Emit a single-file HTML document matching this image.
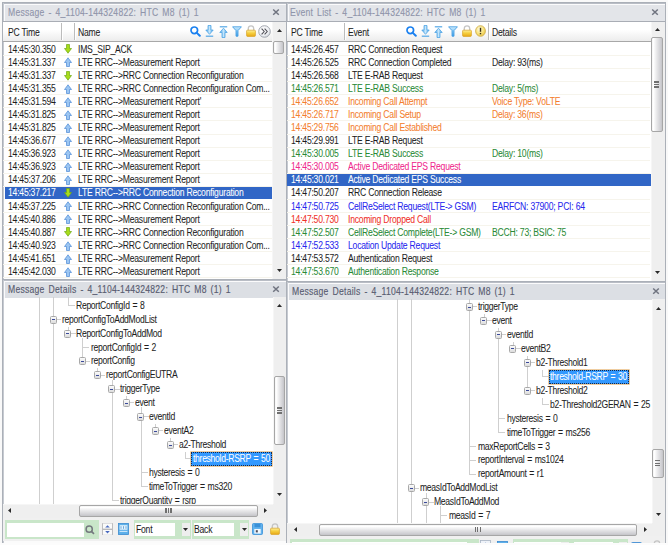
<!DOCTYPE html><html><head><meta charset="utf-8"><style>
*{margin:0;padding:0;box-sizing:border-box}
html,body{width:668px;height:545px;overflow:hidden;background:#f9f9f9;font-family:"Liberation Sans", sans-serif;}
.a{position:absolute}
.t{position:absolute;white-space:nowrap;font-size:10px;letter-spacing:-0.25px;word-spacing:0px;color:#1e1e1e;line-height:13px;transform:scaleX(0.86);transform-origin:0 0;-webkit-text-stroke:0.05px currentColor}
.tr{letter-spacing:-0.35px;word-spacing:0.8px}
.ttl{position:absolute;white-space:nowrap;font-size:10.5px;letter-spacing:0.3px;word-spacing:1.5px;line-height:12px;transform:scaleX(0.82);transform-origin:0 0;-webkit-text-stroke:0.15px currentColor}

.vl{position:absolute;width:1px;background:#cfcfcf}
.hl{position:absolute;height:1px;background:#cfcfcf}
.box{position:absolute;width:7px;height:8px;border:1px solid #a8a8a8;border-radius:1.5px;background:linear-gradient(#fbfbfb,#dcdcdc)}
.box:after{content:"";position:absolute;left:1px;top:2.5px;width:3px;height:1px;background:#3a4a9a}
</style></head><body>
<svg width="0" height="0" style="position:absolute"><defs><linearGradient id="gb" x1="0" y1="0" x2="1" y2="0"><stop offset="0" stop-color="#4aa2e6"/><stop offset="0.5" stop-color="#c4e6fc"/><stop offset="1" stop-color="#4aa2e6"/></linearGradient><linearGradient id="gf" x1="0" y1="0" x2="0" y2="1"><stop offset="0" stop-color="#d4eefe"/><stop offset="0.5" stop-color="#7cc4f4"/><stop offset="1" stop-color="#3a9ae4"/></linearGradient><linearGradient id="gl" x1="0" y1="0" x2="0" y2="1"><stop offset="0" stop-color="#fdf0a0"/><stop offset="0.45" stop-color="#f6d040"/><stop offset="1" stop-color="#e8a818"/></linearGradient><radialGradient id="ge" cx="0.4" cy="0.35" r="0.7"><stop offset="0" stop-color="#fffbe0"/><stop offset="0.6" stop-color="#f8e27a"/><stop offset="1" stop-color="#e8c040"/></radialGradient><radialGradient id="gm" cx="0.4" cy="0.35" r="0.7"><stop offset="0" stop-color="#ffffff"/><stop offset="0.7" stop-color="#eceef2"/><stop offset="1" stop-color="#c8ccd4"/></radialGradient></defs></svg>
<div class="a" style="left:2px;top:2px;width:285px;height:279px;border:1px solid #abb0b8;background:#fff"></div>
<div class="a" style="left:3px;top:3px;width:283px;height:1px;background:#b9bdc5"></div>
<div class="a" style="left:3px;top:3px;width:1px;height:277px;background:#c6cad1"></div>
<div class="a" style="left:4px;top:4px;width:282px;height:18px;background:#e3e5e9;border-top:1px solid #fbfbfc;border-left:1px solid #fbfbfc"></div>
<div class="ttl" style="left:8px;top:6px;color:#9095ab">Message - 4_1104-144324822: HTC M8 (1) 1</div>
<svg class="a" style="left:272px;top:8px" width="8" height="8" viewBox="0 0 8 8"><path d="M1.2 1.5L6.8 6.8M6.8 1.5L1.2 6.8" stroke="#707480" stroke-width="1.5"/></svg>
<div class="a" style="left:3px;top:21px;width:283px;height:1px;background:#a9adb5"></div>
<div class="a" style="left:3px;top:22px;width:269px;height:19px;background:linear-gradient(#ffffff 0%,#ffffff 40%,#ececec 100%)"></div>
<div class="a" style="left:3px;top:41px;width:269px;height:1px;background:#a8a8a8"></div>
<div class="a" style="left:61px;top:23px;width:1px;height:17px;background:#bcbcbc"></div>
<div class="a" style="left:62px;top:23px;width:1px;height:17px;background:#fff"></div>
<div class="a" style="left:74px;top:23px;width:1px;height:17px;background:#bcbcbc"></div>
<div class="a" style="left:75px;top:23px;width:1px;height:17px;background:#fff"></div>
<div class="t" style="left:8px;top:25.7px;">PC Time</div>
<div class="t" style="left:78px;top:25.7px;">Name</div>
<svg class="a" style="left:190px;top:25.5px" width="11" height="11" viewBox="0 0 11 11"><circle cx="4.3" cy="4.3" r="3.3" fill="none" stroke="#1a80f0" stroke-width="1.7"/><path d="M6.6 6.6L9.8 9.8" stroke="#1a80f0" stroke-width="2" stroke-linecap="round"/></svg>
<svg class="a" style="left:204.5px;top:25px" width="9" height="12" viewBox="0 0 9 12"><path d="M3 0.5H6V5H8.2L4.5 9.3L0.8 5H3Z" fill="url(#gb)" stroke="#52a6e6" stroke-width="0.8"/><path d="M0.8 11.2H8.2" stroke="#52a6e6" stroke-width="1.2"/></svg>
<svg class="a" style="left:218.5px;top:25.5px" width="9" height="12" viewBox="0 0 9 12"><path d="M0.8 0.8H8.2" stroke="#52a6e6" stroke-width="1.2"/><path d="M3 11.5H6V6.5H8.2L4.5 2.2L0.8 6.5H3Z" fill="url(#gb)" stroke="#52a6e6" stroke-width="0.8"/></svg>
<svg class="a" style="left:232px;top:26px" width="10" height="11" viewBox="0 0 10 11"><path d="M0.6 0.8H9.4L6 4.6V10.2H4V4.6Z" fill="url(#gf)" stroke="#4aa0e4" stroke-width="0.9" stroke-linejoin="round"/></svg>
<svg class="a" style="left:246px;top:25px" width="10" height="12" viewBox="0 0 10 12"><path d="M2.3 5.5V3.6C2.3 1.9 3.5 0.8 5 0.8C6.5 0.8 7.7 1.9 7.7 3.6V5.5" fill="none" stroke="#c4c4c4" stroke-width="1.3"/><rect x="0.6" y="5.2" width="8.8" height="6.2" rx="0.8" fill="url(#gl)" stroke="#d8a020" stroke-width="0.7"/></svg>
<svg class="a" style="left:257.5px;top:25px" width="13" height="13" viewBox="0 0 13 13"><circle cx="6.5" cy="6.5" r="5.8" fill="url(#gm)" stroke="#a4a8b0" stroke-width="1"/><path d="M3.6 3.6L6.2 6.5L3.6 9.4M6.6 3.6L9.2 6.5L6.6 9.4" fill="none" stroke="#505058" stroke-width="1.1"/></svg>
<div class="a" style="left:272px;top:22px;width:14px;height:258px;background:#efefef;border-left:1px solid #f6f6f6"></div>
<svg class="a" style="left:276.7px;top:28.5px" width="5" height="3" viewBox="0 0 5 3"><path d="M0 3L2.5 0L5 3Z" fill="#2a2a2a"/></svg>
<div class="a" style="left:273px;top:41px;width:11px;height:13px;border:1px solid #a6a6a6;border-radius:2px;background:linear-gradient(90deg,#f4f4f4 0%,#ffffff 15%,#e6e6e8 50%,#cfcfd3 85%,#c4c4c8 100%)"></div>
<svg class="a" style="left:276.5px;top:269.0px" width="5" height="3" viewBox="0 0 5 3"><path d="M0 0L2.5 3L5 0Z" fill="#2a2a2a"/></svg>
<div class="a" style="left:3px;top:55.08px;width:269px;height:1px;background:#f6f4ec"></div>
<div class="t" style="left:8px;top:42.6px;color:#1e1e1e">14:45:30.350</div>
<svg class="a" style="left:64.3px;top:44.4px" width="8" height="10" viewBox="0 0 8 10"><path d="M2.5 0.5H5.5V4.5H7.5L4 9.2L0.5 4.5H2.5Z" fill="#a8dc1a" stroke="#6ea812" stroke-width="0.7"/></svg>
<div class="t" style="left:78.3px;top:42.6px;color:#1e1e1e">IMS_SIP_ACK</div>
<div class="a" style="left:3px;top:68.15px;width:269px;height:1px;background:#f6f4ec"></div>
<div class="t" style="left:8px;top:55.68px;color:#1e1e1e">14:45:31.337</div>
<svg class="a" style="left:64.3px;top:57.48px" width="8" height="10" viewBox="0 0 8 10"><path d="M2.5 9.5H5.5V5.5H7.5L4 0.8L0.5 5.5H2.5Z" fill="#9cc6f2" stroke="#4a88d6" stroke-width="0.7"/></svg>
<div class="t" style="left:78.3px;top:55.68px;color:#1e1e1e">LTE RRC-->Measurement Report</div>
<div class="a" style="left:3px;top:81.23px;width:269px;height:1px;background:#f6f4ec"></div>
<div class="t" style="left:8px;top:68.75px;color:#1e1e1e">14:45:31.337</div>
<svg class="a" style="left:64.3px;top:70.55px" width="8" height="10" viewBox="0 0 8 10"><path d="M2.5 0.5H5.5V4.5H7.5L4 9.2L0.5 4.5H2.5Z" fill="#a8dc1a" stroke="#6ea812" stroke-width="0.7"/></svg>
<div class="t" style="left:78.3px;top:68.75px;color:#1e1e1e">LTE RRC-->RRC Connection Reconfiguration</div>
<div class="a" style="left:3px;top:94.3px;width:269px;height:1px;background:#f6f4ec"></div>
<div class="t" style="left:8px;top:81.82px;color:#1e1e1e">14:45:31.355</div>
<svg class="a" style="left:64.3px;top:83.62px" width="8" height="10" viewBox="0 0 8 10"><path d="M2.5 9.5H5.5V5.5H7.5L4 0.8L0.5 5.5H2.5Z" fill="#9cc6f2" stroke="#4a88d6" stroke-width="0.7"/></svg>
<div class="t" style="left:78.3px;top:81.82px;color:#1e1e1e">LTE RRC-->RRC Connection Reconfiguration Com...</div>
<div class="a" style="left:3px;top:107.38px;width:269px;height:1px;background:#f6f4ec"></div>
<div class="t" style="left:8px;top:94.9px;color:#1e1e1e">14:45:31.594</div>
<svg class="a" style="left:64.3px;top:96.7px" width="8" height="10" viewBox="0 0 8 10"><path d="M2.5 9.5H5.5V5.5H7.5L4 0.8L0.5 5.5H2.5Z" fill="#9cc6f2" stroke="#4a88d6" stroke-width="0.7"/></svg>
<div class="t" style="left:78.3px;top:94.9px;color:#1e1e1e">LTE RRC-->Measurement Report'</div>
<div class="a" style="left:3px;top:120.45px;width:269px;height:1px;background:#f6f4ec"></div>
<div class="t" style="left:8px;top:107.97px;color:#1e1e1e">14:45:31.825</div>
<svg class="a" style="left:64.3px;top:109.78px" width="8" height="10" viewBox="0 0 8 10"><path d="M2.5 9.5H5.5V5.5H7.5L4 0.8L0.5 5.5H2.5Z" fill="#9cc6f2" stroke="#4a88d6" stroke-width="0.7"/></svg>
<div class="t" style="left:78.3px;top:107.97px;color:#1e1e1e">LTE RRC-->Measurement Report</div>
<div class="a" style="left:3px;top:133.52px;width:269px;height:1px;background:#f6f4ec"></div>
<div class="t" style="left:8px;top:121.05px;color:#1e1e1e">14:45:31.825</div>
<svg class="a" style="left:64.3px;top:122.85px" width="8" height="10" viewBox="0 0 8 10"><path d="M2.5 9.5H5.5V5.5H7.5L4 0.8L0.5 5.5H2.5Z" fill="#9cc6f2" stroke="#4a88d6" stroke-width="0.7"/></svg>
<div class="t" style="left:78.3px;top:121.05px;color:#1e1e1e">LTE RRC-->Measurement Report</div>
<div class="a" style="left:3px;top:146.6px;width:269px;height:1px;background:#f6f4ec"></div>
<div class="t" style="left:8px;top:134.12px;color:#1e1e1e">14:45:36.677</div>
<svg class="a" style="left:64.3px;top:135.92px" width="8" height="10" viewBox="0 0 8 10"><path d="M2.5 9.5H5.5V5.5H7.5L4 0.8L0.5 5.5H2.5Z" fill="#9cc6f2" stroke="#4a88d6" stroke-width="0.7"/></svg>
<div class="t" style="left:78.3px;top:134.12px;color:#1e1e1e">LTE RRC-->Measurement Report</div>
<div class="a" style="left:3px;top:159.67px;width:269px;height:1px;background:#f6f4ec"></div>
<div class="t" style="left:8px;top:147.2px;color:#1e1e1e">14:45:36.923</div>
<svg class="a" style="left:64.3px;top:149.0px" width="8" height="10" viewBox="0 0 8 10"><path d="M2.5 9.5H5.5V5.5H7.5L4 0.8L0.5 5.5H2.5Z" fill="#9cc6f2" stroke="#4a88d6" stroke-width="0.7"/></svg>
<div class="t" style="left:78.3px;top:147.2px;color:#1e1e1e">LTE RRC-->Measurement Report</div>
<div class="a" style="left:3px;top:172.75px;width:269px;height:1px;background:#f6f4ec"></div>
<div class="t" style="left:8px;top:160.28px;color:#1e1e1e">14:45:36.923</div>
<svg class="a" style="left:64.3px;top:162.08px" width="8" height="10" viewBox="0 0 8 10"><path d="M2.5 9.5H5.5V5.5H7.5L4 0.8L0.5 5.5H2.5Z" fill="#9cc6f2" stroke="#4a88d6" stroke-width="0.7"/></svg>
<div class="t" style="left:78.3px;top:160.28px;color:#1e1e1e">LTE RRC-->Measurement Report</div>
<div class="a" style="left:3px;top:185.82px;width:269px;height:1px;background:#f6f4ec"></div>
<div class="t" style="left:8px;top:173.35px;color:#1e1e1e">14:45:37.206</div>
<svg class="a" style="left:64.3px;top:175.15px" width="8" height="10" viewBox="0 0 8 10"><path d="M2.5 9.5H5.5V5.5H7.5L4 0.8L0.5 5.5H2.5Z" fill="#9cc6f2" stroke="#4a88d6" stroke-width="0.7"/></svg>
<div class="t" style="left:78.3px;top:173.35px;color:#1e1e1e">LTE RRC-->Measurement Report</div>
<div class="a" style="left:5px;top:186.82px;width:267px;height:12.4px;background:#3166c6"></div>
<div class="t" style="left:8px;top:186.42px;color:#ffffff">14:45:37.217</div>
<svg class="a" style="left:64.3px;top:188.22px" width="8" height="10" viewBox="0 0 8 10"><path d="M2.5 0.5H5.5V4.5H7.5L4 9.2L0.5 4.5H2.5Z" fill="#a8dc1a" stroke="#6ea812" stroke-width="0.7"/></svg>
<div class="t" style="left:78.3px;top:186.42px;color:#ffffff">LTE RRC-->RRC Connection Reconfiguration</div>
<div class="a" style="left:3px;top:211.97px;width:269px;height:1px;background:#f6f4ec"></div>
<div class="t" style="left:8px;top:199.5px;color:#1e1e1e">14:45:37.225</div>
<svg class="a" style="left:64.3px;top:201.3px" width="8" height="10" viewBox="0 0 8 10"><path d="M2.5 9.5H5.5V5.5H7.5L4 0.8L0.5 5.5H2.5Z" fill="#9cc6f2" stroke="#4a88d6" stroke-width="0.7"/></svg>
<div class="t" style="left:78.3px;top:199.5px;color:#1e1e1e">LTE RRC-->RRC Connection Reconfiguration Com...</div>
<div class="a" style="left:3px;top:225.05px;width:269px;height:1px;background:#f6f4ec"></div>
<div class="t" style="left:8px;top:212.57px;color:#1e1e1e">14:45:40.886</div>
<svg class="a" style="left:64.3px;top:214.38px" width="8" height="10" viewBox="0 0 8 10"><path d="M2.5 9.5H5.5V5.5H7.5L4 0.8L0.5 5.5H2.5Z" fill="#9cc6f2" stroke="#4a88d6" stroke-width="0.7"/></svg>
<div class="t" style="left:78.3px;top:212.57px;color:#1e1e1e">LTE RRC-->Measurement Report</div>
<div class="a" style="left:3px;top:238.12px;width:269px;height:1px;background:#f6f4ec"></div>
<div class="t" style="left:8px;top:225.65px;color:#1e1e1e">14:45:40.887</div>
<svg class="a" style="left:64.3px;top:227.45px" width="8" height="10" viewBox="0 0 8 10"><path d="M2.5 0.5H5.5V4.5H7.5L4 9.2L0.5 4.5H2.5Z" fill="#a8dc1a" stroke="#6ea812" stroke-width="0.7"/></svg>
<div class="t" style="left:78.3px;top:225.65px;color:#1e1e1e">LTE RRC-->RRC Connection Reconfiguration</div>
<div class="a" style="left:3px;top:251.2px;width:269px;height:1px;background:#f6f4ec"></div>
<div class="t" style="left:8px;top:238.72px;color:#1e1e1e">14:45:40.923</div>
<svg class="a" style="left:64.3px;top:240.53px" width="8" height="10" viewBox="0 0 8 10"><path d="M2.5 9.5H5.5V5.5H7.5L4 0.8L0.5 5.5H2.5Z" fill="#9cc6f2" stroke="#4a88d6" stroke-width="0.7"/></svg>
<div class="t" style="left:78.3px;top:238.72px;color:#1e1e1e">LTE RRC-->RRC Connection Reconfiguration Com...</div>
<div class="a" style="left:3px;top:264.27px;width:269px;height:1px;background:#f6f4ec"></div>
<div class="t" style="left:8px;top:251.8px;color:#1e1e1e">14:45:41.651</div>
<svg class="a" style="left:64.3px;top:253.6px" width="8" height="10" viewBox="0 0 8 10"><path d="M2.5 9.5H5.5V5.5H7.5L4 0.8L0.5 5.5H2.5Z" fill="#9cc6f2" stroke="#4a88d6" stroke-width="0.7"/></svg>
<div class="t" style="left:78.3px;top:251.8px;color:#1e1e1e">LTE RRC-->Measurement Report</div>
<div class="a" style="left:3px;top:277.35px;width:269px;height:1px;background:#f6f4ec"></div>
<div class="t" style="left:8px;top:264.88px;color:#1e1e1e">14:45:42.030</div>
<svg class="a" style="left:64.3px;top:266.67px" width="8" height="10" viewBox="0 0 8 10"><path d="M2.5 9.5H5.5V5.5H7.5L4 0.8L0.5 5.5H2.5Z" fill="#9cc6f2" stroke="#4a88d6" stroke-width="0.7"/></svg>
<div class="t" style="left:78.3px;top:264.88px;color:#1e1e1e">LTE RRC-->Measurement Report</div>
<div class="a" style="left:286px;top:2px;width:380px;height:281px;border:1px solid #abb0b8;background:#fff"></div>
<div class="a" style="left:287px;top:3px;width:378px;height:1px;background:#b9bdc5"></div>
<div class="a" style="left:287px;top:3px;width:1px;height:279px;background:#c6cad1"></div>
<div class="a" style="left:288px;top:4px;width:377px;height:18px;background:#e3e5e9;border-top:1px solid #fbfbfc;border-left:1px solid #fbfbfc"></div>
<div class="ttl" style="left:290px;top:6px;color:#9095ab">Event List - 4_1104-144324822: HTC M8 (1) 1</div>
<svg class="a" style="left:651px;top:8px" width="8" height="8" viewBox="0 0 8 8"><path d="M1.2 1.5L6.8 6.8M6.8 1.5L1.2 6.8" stroke="#707480" stroke-width="1.5"/></svg>
<div class="a" style="left:287px;top:21px;width:378px;height:1px;background:#a9adb5"></div>
<div class="a" style="left:287px;top:22px;width:364px;height:19px;background:linear-gradient(#ffffff 0%,#ffffff 40%,#ececec 100%)"></div>
<div class="a" style="left:287px;top:41px;width:364px;height:1px;background:#a8a8a8"></div>
<div class="a" style="left:344px;top:23px;width:1px;height:17px;background:#bcbcbc"></div>
<div class="a" style="left:345px;top:23px;width:1px;height:17px;background:#fff"></div>
<div class="a" style="left:488px;top:23px;width:1px;height:17px;background:#bcbcbc"></div>
<div class="a" style="left:489px;top:23px;width:1px;height:17px;background:#fff"></div>
<div class="t" style="left:290.6px;top:25.7px;">PC Time</div>
<div class="t" style="left:347.8px;top:25.7px;">Event</div>
<div class="t" style="left:491.6px;top:25.7px;">Details</div>
<svg class="a" style="left:406px;top:25.5px" width="11" height="11" viewBox="0 0 11 11"><circle cx="4.3" cy="4.3" r="3.3" fill="none" stroke="#1a80f0" stroke-width="1.7"/><path d="M6.6 6.6L9.8 9.8" stroke="#1a80f0" stroke-width="2" stroke-linecap="round"/></svg>
<svg class="a" style="left:420.5px;top:25px" width="9" height="12" viewBox="0 0 9 12"><path d="M3 0.5H6V5H8.2L4.5 9.3L0.8 5H3Z" fill="url(#gb)" stroke="#52a6e6" stroke-width="0.8"/><path d="M0.8 11.2H8.2" stroke="#52a6e6" stroke-width="1.2"/></svg>
<svg class="a" style="left:434px;top:25.5px" width="9" height="12" viewBox="0 0 9 12"><path d="M0.8 0.8H8.2" stroke="#52a6e6" stroke-width="1.2"/><path d="M3 11.5H6V6.5H8.2L4.5 2.2L0.8 6.5H3Z" fill="url(#gb)" stroke="#52a6e6" stroke-width="0.8"/></svg>
<svg class="a" style="left:447.5px;top:26px" width="10" height="11" viewBox="0 0 10 11"><path d="M0.6 0.8H9.4L6 4.6V10.2H4V4.6Z" fill="url(#gf)" stroke="#4aa0e4" stroke-width="0.9" stroke-linejoin="round"/></svg>
<svg class="a" style="left:462px;top:25px" width="10" height="12" viewBox="0 0 10 12"><path d="M2.3 5.5V3.6C2.3 1.9 3.5 0.8 5 0.8C6.5 0.8 7.7 1.9 7.7 3.6V5.5" fill="none" stroke="#c4c4c4" stroke-width="1.3"/><rect x="0.6" y="5.2" width="8.8" height="6.2" rx="0.8" fill="url(#gl)" stroke="#d8a020" stroke-width="0.7"/></svg>
<svg class="a" style="left:474.5px;top:25px" width="11" height="12" viewBox="0 0 11 12"><ellipse cx="5.5" cy="6" rx="4.9" ry="5.3" fill="url(#ge)" stroke="#d0b050" stroke-width="0.9"/><path d="M5.5 2.8V6.8" stroke="#3a3018" stroke-width="1.4"/><rect x="4.8" y="7.9" width="1.4" height="1.4" fill="#3a3018"/></svg>
<div class="a" style="left:651px;top:22px;width:14px;height:260px;background:#efefef;border-left:1px solid #f6f6f6"></div>
<svg class="a" style="left:654.8px;top:28.2px" width="5" height="3" viewBox="0 0 5 3"><path d="M0 3L2.5 0L5 3Z" fill="#2a2a2a"/></svg>
<div class="a" style="left:651px;top:37px;width:12px;height:95px;border:1px solid #a6a6a6;border-radius:2px;background:linear-gradient(90deg,#f4f4f4 0%,#ffffff 15%,#e6e6e8 50%,#cfcfd3 85%,#c4c4c8 100%)"></div>
<div class="a" style="left:654px;top:81.3px;width:5px;height:1.4px;background:#707070"></div>
<div class="a" style="left:654px;top:83.8px;width:5px;height:1.4px;background:#707070"></div>
<div class="a" style="left:654px;top:86.3px;width:5px;height:1.4px;background:#707070"></div>
<svg class="a" style="left:654.8px;top:270.5px" width="5" height="3" viewBox="0 0 5 3"><path d="M0 0L2.5 3L5 0Z" fill="#2a2a2a"/></svg>
<div class="a" style="left:287px;top:55.08px;width:363px;height:1px;background:#f6f4ec"></div>
<div class="t" style="left:290.6px;top:42.6px;color:#1e1e1e">14:45:26.457</div>
<div class="a" style="left:347.8px;top:43.0px;width:141px;height:13px;overflow:hidden">
<div class="t" style="left:0px;top:-0.4px;color:#1e1e1e">RRC Connection Request</div>
</div>
<div class="a" style="left:287px;top:68.15px;width:363px;height:1px;background:#f6f4ec"></div>
<div class="t" style="left:290.6px;top:55.68px;color:#1e1e1e">14:45:26.525</div>
<div class="a" style="left:347.8px;top:56.08px;width:141px;height:13px;overflow:hidden">
<div class="t" style="left:0px;top:-0.4px;color:#1e1e1e">RRC Connection Completed</div>
</div>
<div class="t" style="left:491.6px;top:55.68px;color:#1e1e1e">Delay: 93(ms)</div>
<div class="a" style="left:287px;top:81.23px;width:363px;height:1px;background:#f6f4ec"></div>
<div class="t" style="left:290.6px;top:68.75px;color:#1e1e1e">14:45:26.568</div>
<div class="a" style="left:347.8px;top:69.15px;width:141px;height:13px;overflow:hidden">
<div class="t" style="left:0px;top:-0.4px;color:#1e1e1e">LTE E-RAB Request</div>
</div>
<div class="a" style="left:287px;top:94.3px;width:363px;height:1px;background:#f6f4ec"></div>
<div class="t" style="left:290.6px;top:81.82px;color:#2a8a36">14:45:26.571</div>
<div class="a" style="left:347.8px;top:82.22px;width:141px;height:13px;overflow:hidden">
<div class="t" style="left:0px;top:-0.4px;color:#2a8a36">LTE E-RAB Success</div>
</div>
<div class="t" style="left:491.6px;top:81.82px;color:#2a8a36">Delay: 5(ms)</div>
<div class="a" style="left:287px;top:107.38px;width:363px;height:1px;background:#f6f4ec"></div>
<div class="t" style="left:290.6px;top:94.9px;color:#f47e2e">14:45:26.652</div>
<div class="a" style="left:347.8px;top:95.3px;width:141px;height:13px;overflow:hidden">
<div class="t" style="left:0px;top:-0.4px;color:#f47e2e">Incoming Call Attempt</div>
</div>
<div class="t" style="left:491.6px;top:94.9px;color:#f47e2e">Voice Type: VoLTE</div>
<div class="a" style="left:287px;top:120.45px;width:363px;height:1px;background:#f6f4ec"></div>
<div class="t" style="left:290.6px;top:107.97px;color:#f47e2e">14:45:26.717</div>
<div class="a" style="left:347.8px;top:108.38px;width:141px;height:13px;overflow:hidden">
<div class="t" style="left:0px;top:-0.4px;color:#f47e2e">Incoming Call Setup</div>
</div>
<div class="t" style="left:491.6px;top:107.97px;color:#f47e2e">Delay: 36(ms)</div>
<div class="a" style="left:287px;top:133.52px;width:363px;height:1px;background:#f6f4ec"></div>
<div class="t" style="left:290.6px;top:121.05px;color:#f47e2e">14:45:29.756</div>
<div class="a" style="left:347.8px;top:121.45px;width:141px;height:13px;overflow:hidden">
<div class="t" style="left:0px;top:-0.4px;color:#f47e2e">Incoming Call Established</div>
</div>
<div class="a" style="left:287px;top:146.6px;width:363px;height:1px;background:#f6f4ec"></div>
<div class="t" style="left:290.6px;top:134.12px;color:#1e1e1e">14:45:29.991</div>
<div class="a" style="left:347.8px;top:134.52px;width:141px;height:13px;overflow:hidden">
<div class="t" style="left:0px;top:-0.4px;color:#1e1e1e">LTE E-RAB Request</div>
</div>
<div class="a" style="left:287px;top:159.67px;width:363px;height:1px;background:#f6f4ec"></div>
<div class="t" style="left:290.6px;top:147.2px;color:#2a8a36">14:45:30.005</div>
<div class="a" style="left:347.8px;top:147.6px;width:141px;height:13px;overflow:hidden">
<div class="t" style="left:0px;top:-0.4px;color:#2a8a36">LTE E-RAB Success</div>
</div>
<div class="t" style="left:491.6px;top:147.2px;color:#2a8a36">Delay: 10(ms)</div>
<div class="a" style="left:287px;top:172.75px;width:363px;height:1px;background:#f6f4ec"></div>
<div class="t" style="left:290.6px;top:160.28px;color:#f0288c">14:45:30.005</div>
<div class="a" style="left:347.8px;top:160.68px;width:141px;height:13px;overflow:hidden">
<div class="t" style="left:0px;top:-0.4px;color:#f0288c">Active Dedicated EPS Request</div>
</div>
<div class="a" style="left:287px;top:173.75px;width:364px;height:12.4px;background:#3166c6"></div>
<div class="t" style="left:290.6px;top:173.35px;color:#ffffff">14:45:30.021</div>
<div class="a" style="left:347.8px;top:173.75px;width:141px;height:13px;overflow:hidden">
<div class="t" style="left:0px;top:-0.4px;color:#ffffff">Active Dedicated EPS Success</div>
</div>
<div class="a" style="left:287px;top:198.9px;width:363px;height:1px;background:#f6f4ec"></div>
<div class="t" style="left:290.6px;top:186.42px;color:#1e1e1e">14:47:50.207</div>
<div class="a" style="left:347.8px;top:186.82px;width:141px;height:13px;overflow:hidden">
<div class="t" style="left:0px;top:-0.4px;color:#1e1e1e">RRC Connection Release</div>
</div>
<div class="a" style="left:287px;top:211.97px;width:363px;height:1px;background:#f6f4ec"></div>
<div class="t" style="left:290.6px;top:199.5px;color:#2828ee">14:47:50.725</div>
<div class="a" style="left:347.8px;top:199.9px;width:141px;height:13px;overflow:hidden">
<div class="t" style="left:0px;top:-0.4px;color:#2828ee">CellReSelect Request(LTE-&gt; GSM)</div>
</div>
<div class="t" style="left:491.6px;top:199.5px;color:#2828ee">EARFCN: 37900; PCI: 64</div>
<div class="a" style="left:287px;top:225.05px;width:363px;height:1px;background:#f6f4ec"></div>
<div class="t" style="left:290.6px;top:212.57px;color:#f03028">14:47:50.730</div>
<div class="a" style="left:347.8px;top:212.97px;width:141px;height:13px;overflow:hidden">
<div class="t" style="left:0px;top:-0.4px;color:#f03028">Incoming Dropped Call</div>
</div>
<div class="a" style="left:287px;top:238.12px;width:363px;height:1px;background:#f6f4ec"></div>
<div class="t" style="left:290.6px;top:225.65px;color:#2a8a36">14:47:52.507</div>
<div class="a" style="left:347.8px;top:226.05px;width:141px;height:13px;overflow:hidden">
<div class="t" style="left:0px;top:-0.4px;color:#2a8a36">CellReSelect Complete(LTE-&gt; GSM)</div>
</div>
<div class="t" style="left:491.6px;top:225.65px;color:#2a8a36">BCCH: 73; BSIC: 75</div>
<div class="a" style="left:287px;top:251.2px;width:363px;height:1px;background:#f6f4ec"></div>
<div class="t" style="left:290.6px;top:238.72px;color:#2828ee">14:47:52.533</div>
<div class="a" style="left:347.8px;top:239.12px;width:141px;height:13px;overflow:hidden">
<div class="t" style="left:0px;top:-0.4px;color:#2828ee">Location Update Request</div>
</div>
<div class="a" style="left:287px;top:264.27px;width:363px;height:1px;background:#f6f4ec"></div>
<div class="t" style="left:290.6px;top:251.8px;color:#1e1e1e">14:47:53.572</div>
<div class="a" style="left:347.8px;top:252.2px;width:141px;height:13px;overflow:hidden">
<div class="t" style="left:0px;top:-0.4px;color:#1e1e1e">Authentication Request</div>
</div>
<div class="a" style="left:287px;top:277.35px;width:363px;height:1px;background:#f6f4ec"></div>
<div class="t" style="left:290.6px;top:264.88px;color:#2a8a36">14:47:53.670</div>
<div class="a" style="left:347.8px;top:265.27px;width:141px;height:13px;overflow:hidden">
<div class="t" style="left:0px;top:-0.4px;color:#2a8a36">Authentication Response</div>
</div>
<div class="a" style="left:2px;top:279px;width:285px;height:265px;border:1px solid #abb0b8;background:#fff"></div>
<div class="a" style="left:3px;top:280px;width:283px;height:1px;background:#b9bdc5"></div>
<div class="a" style="left:3px;top:280px;width:1px;height:263px;background:#c6cad1"></div>
<div class="a" style="left:4px;top:281px;width:282px;height:17px;background:#dcdfe4;border-top:1px solid #fbfbfc;border-left:1px solid #fbfbfc"></div>
<div class="ttl" style="left:7.7px;top:283px;color:#585c70">Message Details - 4_1104-144324822: HTC M8 (1) 1</div>
<svg class="a" style="left:272.3px;top:285px" width="8" height="8" viewBox="0 0 8 8"><path d="M1.2 1.5L6.8 6.8M6.8 1.5L1.2 6.8" stroke="#707480" stroke-width="1.5"/></svg>
<div class="a" style="left:3px;top:297px;width:270px;height:207px;overflow:hidden">
<div class="vl" style="left:35.60px;top:-19.04px;height:306.24px"></div>
<div class="vl" style="left:50.20px;top:-19.04px;height:306.24px"></div>
<div class="vl" style="left:64.80px;top:-19.04px;height:27.84px"></div>
<div class="vl" style="left:79.40px;top:40.82px;height:23.66px"></div>
<div class="vl" style="left:108.60px;top:82.58px;height:121.10px"></div>
<div class="vl" style="left:137.80px;top:110.42px;height:79.34px"></div>
<div class="vl" style="left:64.80px;top:1.80px;height:7px"></div>
<div class="hl" style="left:64.80px;top:8.00px;width:7px"></div>
<div class="t tr" style="left:73.3px;top:1.8px;">ReportConfigId = 8</div>
<div class="vl" style="left:50.20px;top:15.72px;height:3px"></div>
<div class="hl" style="left:53.20px;top:21.92px;width:5px"></div>
<div class="box" style="left:46.70px;top:18.72px"></div>
<div class="t tr" style="left:58.7px;top:15.72px;">reportConfigToAddModList</div>
<div class="vl" style="left:64.80px;top:29.64px;height:3px"></div>
<div class="hl" style="left:67.80px;top:35.84px;width:5px"></div>
<div class="box" style="left:61.30px;top:32.64px"></div>
<div class="t tr" style="left:73.3px;top:29.64px;">ReportConfigToAddMod</div>
<div class="vl" style="left:79.40px;top:43.56px;height:7px"></div>
<div class="hl" style="left:79.40px;top:49.76px;width:7px"></div>
<div class="t tr" style="left:87.9px;top:43.56px;">reportConfigId = 2</div>
<div class="vl" style="left:79.40px;top:57.48px;height:3px"></div>
<div class="hl" style="left:82.40px;top:63.68px;width:5px"></div>
<div class="box" style="left:75.90px;top:60.48px"></div>
<div class="t tr" style="left:87.9px;top:57.48px;">reportConfig</div>
<div class="vl" style="left:94.00px;top:71.40px;height:3px"></div>
<div class="hl" style="left:97.00px;top:77.60px;width:5px"></div>
<div class="box" style="left:90.50px;top:74.40px"></div>
<div class="t tr" style="left:102.5px;top:71.4px;">reportConfigEUTRA</div>
<div class="vl" style="left:108.60px;top:85.32px;height:3px"></div>
<div class="hl" style="left:111.60px;top:91.52px;width:5px"></div>
<div class="box" style="left:105.10px;top:88.32px"></div>
<div class="t tr" style="left:117.1px;top:85.32px;">triggerType</div>
<div class="vl" style="left:123.20px;top:99.24px;height:3px"></div>
<div class="hl" style="left:126.20px;top:105.44px;width:5px"></div>
<div class="box" style="left:119.70px;top:102.24px"></div>
<div class="t tr" style="left:131.7px;top:99.24px;">event</div>
<div class="vl" style="left:137.80px;top:113.16px;height:3px"></div>
<div class="hl" style="left:140.80px;top:119.36px;width:5px"></div>
<div class="box" style="left:134.30px;top:116.16px"></div>
<div class="t tr" style="left:146.3px;top:113.16px;">eventId</div>
<div class="vl" style="left:152.40px;top:127.08px;height:3px"></div>
<div class="hl" style="left:155.40px;top:133.28px;width:5px"></div>
<div class="box" style="left:148.90px;top:130.08px"></div>
<div class="t tr" style="left:160.9px;top:127.08px;">eventA2</div>
<div class="vl" style="left:167.00px;top:141.00px;height:3px"></div>
<div class="hl" style="left:170.00px;top:147.20px;width:5px"></div>
<div class="box" style="left:163.50px;top:144.00px"></div>
<div class="t tr" style="left:175.5px;top:141.0px;">a2-Threshold</div>
<div class="vl" style="left:181.60px;top:154.92px;height:7px"></div>
<div class="hl" style="left:181.60px;top:161.12px;width:7px"></div>
<div class="a" style="left:188.30px;top:155.42px;width:80.5px;height:13.5px;background:#3399ff;border:1px dotted #1a2a48;box-shadow:0 0 0 0.7px #e8b878"></div>
<div class="t tr" style="left:190.1px;top:154.92px;color:#fff">threshold-RSRP = 50</div>
<div class="vl" style="left:137.80px;top:168.84px;height:7px"></div>
<div class="hl" style="left:137.80px;top:175.04px;width:7px"></div>
<div class="t tr" style="left:146.3px;top:168.84px;">hysteresis = 0</div>
<div class="vl" style="left:137.80px;top:182.76px;height:7px"></div>
<div class="hl" style="left:137.80px;top:188.96px;width:7px"></div>
<div class="t tr" style="left:146.3px;top:182.76px;">timeToTrigger = ms320</div>
<div class="vl" style="left:108.60px;top:196.68px;height:7px"></div>
<div class="hl" style="left:108.60px;top:202.88px;width:7px"></div>
<div class="t tr" style="left:117.1px;top:196.68px;">triggerQuantity = rsrp</div>
</div>
<div class="a" style="left:273px;top:297px;width:13px;height:207px;background:#efefef;border-left:1px solid #f6f6f6"></div>
<svg class="a" style="left:277.0px;top:304.1px" width="5" height="3" viewBox="0 0 5 3"><path d="M0 3L2.5 0L5 3Z" fill="#2a2a2a"/></svg>
<div class="a" style="left:273.5px;top:376px;width:11px;height:69px;border:1px solid #a6a6a6;border-radius:2px;background:linear-gradient(90deg,#f4f4f4 0%,#ffffff 15%,#e6e6e8 50%,#cfcfd3 85%,#c4c4c8 100%)"></div>
<div class="a" style="left:276.5px;top:407.3px;width:5px;height:1.4px;background:#707070"></div>
<div class="a" style="left:276.5px;top:409.8px;width:5px;height:1.4px;background:#707070"></div>
<div class="a" style="left:276.5px;top:412.3px;width:5px;height:1.4px;background:#707070"></div>
<svg class="a" style="left:277.0px;top:493.3px" width="5" height="3" viewBox="0 0 5 3"><path d="M0 0L2.5 3L5 0Z" fill="#2a2a2a"/></svg>
<div class="a" style="left:3px;top:504px;width:270px;height:14px;background:#efefef;border-top:1px solid #f6f6f6"></div>
<svg class="a" style="left:8.3px;top:508.0px" width="3" height="5" viewBox="0 0 3 5"><path d="M3 0L0 2.5L3 5Z" fill="#2a2a2a"/></svg>
<div class="a" style="left:79px;top:505px;width:179px;height:12px;border:1px solid #a6a6a6;border-radius:2px;background:linear-gradient(180deg,#f4f4f4 0%,#ffffff 15%,#e6e6e8 50%,#cfcfd3 85%,#c4c4c8 100%)"></div>
<div class="a" style="left:165.3px;top:508px;width:1.4px;height:5px;background:#707070"></div>
<div class="a" style="left:167.8px;top:508px;width:1.4px;height:5px;background:#707070"></div>
<div class="a" style="left:170.3px;top:508px;width:1.4px;height:5px;background:#707070"></div>
<svg class="a" style="left:263.8px;top:508.0px" width="3" height="5" viewBox="0 0 3 5"><path d="M0 0L3 2.5L0 5Z" fill="#2a2a2a"/></svg>
<div class="a" style="left:273px;top:504px;width:13px;height:14px;background:#efefef"></div>
<div class="a" style="left:3px;top:518px;width:283px;height:23px;background:#f0f0f0"></div>
<div class="a" style="left:4px;top:541px;width:282px;height:4px;background:#fbfbfb"></div>
<div class="a" style="left:5.2px;top:520.2px;width:93.5px;height:18.5px;background:#c9e6c9"></div>
<div class="a" style="left:7.2px;top:523px;width:77px;height:13.7px;background:#fff"></div>
<svg class="a" style="left:85px;top:524.5px" width="10" height="10" viewBox="0 0 10 10"><circle cx="4.2" cy="4.2" r="3.1" fill="none" stroke="#74787e" stroke-width="1.5"/><path d="M6.4 6.4L9 8.8" stroke="#74787e" stroke-width="1.6"/></svg>
<svg class="a" style="left:102px;top:522.8px" width="11" height="12.5" viewBox="0 0 11 12.5"><rect x="0" y="0" width="11" height="12.5" fill="#fafafa"/><path d="M0.5 0V12.5M10.5 0V12.5" stroke="#b4b4b8" stroke-width="0.9"/><path d="M0.5 0.4H10.5M0.5 12.1H10.5" stroke="#d0d0d4" stroke-width="0.8"/><path d="M3.2 4.6L5.5 2.2L7.8 4.6Z" fill="#4a6ac0"/><path d="M3.2 8L5.5 10.4L7.8 8Z" fill="#4a6ac0"/><rect x="0.8" y="5.6" width="9.4" height="1.4" fill="#b8b8bc"/></svg>
<svg class="a" style="left:118px;top:523px" width="11" height="12" viewBox="0 0 11 12"><rect x="0.5" y="0.5" width="10" height="11" fill="#5eb0ea" stroke="#3a8ad0" stroke-width="0.8"/><rect x="1.6" y="2.2" width="7.8" height="4.5" fill="#e4f2fc"/><path d="M3 3.2V5.8M5.5 3.2V5.8M8 3.2V5.8" stroke="#3a8ad0" stroke-width="0.7"/><path d="M1.6 8.4H9.4" stroke="#e4f2fc" stroke-width="0.9"/></svg>
<div class="a" style="left:133.6px;top:520.2px;width:57.4px;height:18.5px;background:#c9e6c9"></div>
<div class="a" style="left:134.8px;top:522.5px;width:40.7px;height:13.7px;background:#fff"></div>
<div class="t" style="left:135.5px;top:523.2px;">Font</div>
<div class="a" style="left:181.5px;top:522.5px;width:8.4px;height:13.7px;background:#eeeeee"></div>
<svg class="a" style="left:183.1px;top:528.0px" width="5" height="3" viewBox="0 0 5 3"><path d="M0 0L2.5 3L5 0Z" fill="#2a2a2a"/></svg>
<div class="a" style="left:192.1px;top:520.2px;width:56.6px;height:18.5px;background:#c9e6c9"></div>
<div class="a" style="left:194px;top:522.5px;width:39.8px;height:13.7px;background:#fff"></div>
<div class="t" style="left:194.2px;top:523.2px;">Back</div>
<div class="a" style="left:240.1px;top:522.5px;width:7.8px;height:13.7px;background:#eeeeee"></div>
<svg class="a" style="left:241.5px;top:528.0px" width="5" height="3" viewBox="0 0 5 3"><path d="M0 0L2.5 3L5 0Z" fill="#2a2a2a"/></svg>
<svg class="a" style="left:252px;top:523px" width="11" height="12" viewBox="0 0 11 12"><rect x="0.5" y="0.5" width="10" height="11" rx="1" fill="#62b2ee" stroke="#3a90d8" stroke-width="0.8"/><rect x="2.3" y="6" width="6.4" height="4.6" fill="#f2f8fe"/><rect x="3.8" y="7.2" width="2" height="2.2" fill="#4a4a5a"/><rect x="2.5" y="1" width="6" height="3.2" fill="#3a90d8"/></svg>
<svg class="a" style="left:270px;top:523px" width="10" height="12" viewBox="0 0 10 12"><path d="M2.3 5.5V3.6C2.3 1.9 3.5 0.8 5 0.8C6.5 0.8 7.7 1.9 7.7 3.6V5.5" fill="none" stroke="#c4c4c4" stroke-width="1.3"/><rect x="0.6" y="5.2" width="8.8" height="6.2" rx="0.8" fill="url(#gl)" stroke="#d8a020" stroke-width="0.7"/></svg>
<div class="a" style="left:286px;top:281px;width:380px;height:280px;border:1px solid #abb0b8;background:#fff"></div>
<div class="a" style="left:287px;top:282px;width:378px;height:1px;background:#b9bdc5"></div>
<div class="a" style="left:287px;top:282px;width:1px;height:278px;background:#c6cad1"></div>
<div class="a" style="left:288px;top:283px;width:377px;height:17px;background:#dcdfe4;border-top:1px solid #fbfbfc;border-left:1px solid #fbfbfc"></div>
<div class="ttl" style="left:292.2px;top:285px;color:#585c70">Message Details - 4_1104-144324822: HTC M8 (1) 1</div>
<svg class="a" style="left:651.6px;top:286.7px" width="8" height="8" viewBox="0 0 8 8"><path d="M1.2 1.5L6.8 6.8M6.8 1.5L1.2 6.8" stroke="#707480" stroke-width="1.5"/></svg>
<div class="a" style="left:287px;top:299px;width:365px;height:224px;overflow:hidden">
<div class="vl" style="left:109.80px;top:-19.90px;height:306.90px"></div>
<div class="vl" style="left:124.30px;top:-19.90px;height:306.90px"></div>
<div class="vl" style="left:182.30px;top:-19.90px;height:195.30px"></div>
<div class="vl" style="left:211.30px;top:40.08px;height:93.47px"></div>
<div class="vl" style="left:240.30px;top:67.99px;height:23.71px"></div>
<div class="vl" style="left:138.80px;top:193.53px;height:93.47px"></div>
<div class="vl" style="left:153.30px;top:207.49px;height:79.51px"></div>
<div class="vl" style="left:182.30px;top:1.00px;height:3px"></div>
<div class="hl" style="left:185.30px;top:7.20px;width:5px"></div>
<div class="box" style="left:178.80px;top:4.00px"></div>
<div class="t tr" style="left:190.8px;top:1.0px;">triggerType</div>
<div class="vl" style="left:196.80px;top:14.95px;height:3px"></div>
<div class="hl" style="left:199.80px;top:21.15px;width:5px"></div>
<div class="box" style="left:193.30px;top:17.95px"></div>
<div class="t tr" style="left:205.3px;top:14.95px;">event</div>
<div class="vl" style="left:211.30px;top:28.90px;height:3px"></div>
<div class="hl" style="left:214.30px;top:35.10px;width:5px"></div>
<div class="box" style="left:207.80px;top:31.90px"></div>
<div class="t tr" style="left:219.8px;top:28.9px;">eventId</div>
<div class="vl" style="left:225.80px;top:42.85px;height:3px"></div>
<div class="hl" style="left:228.80px;top:49.05px;width:5px"></div>
<div class="box" style="left:222.30px;top:45.85px"></div>
<div class="t tr" style="left:234.3px;top:42.85px;">eventB2</div>
<div class="vl" style="left:240.30px;top:56.80px;height:3px"></div>
<div class="hl" style="left:243.30px;top:63.00px;width:5px"></div>
<div class="box" style="left:236.80px;top:59.80px"></div>
<div class="t tr" style="left:248.8px;top:56.8px;">b2-Threshold1</div>
<div class="vl" style="left:254.80px;top:70.75px;height:7px"></div>
<div class="hl" style="left:254.80px;top:76.95px;width:7px"></div>
<div class="a" style="left:261.50px;top:71.25px;width:80.5px;height:13.5px;background:#3399ff;border:1px dotted #1a2a48;box-shadow:0 0 0 0.7px #e8b878"></div>
<div class="t tr" style="left:263.3px;top:70.75px;color:#fff">threshold-RSRP = 30</div>
<div class="vl" style="left:240.30px;top:84.70px;height:3px"></div>
<div class="hl" style="left:243.30px;top:90.90px;width:5px"></div>
<div class="box" style="left:236.80px;top:87.70px"></div>
<div class="t tr" style="left:248.8px;top:84.7px;">b2-Threshold2</div>
<div class="vl" style="left:254.80px;top:98.65px;height:7px"></div>
<div class="hl" style="left:254.80px;top:104.85px;width:7px"></div>
<div class="t tr" style="left:263.3px;top:98.65px;">b2-Threshold2GERAN = 25</div>
<div class="vl" style="left:211.30px;top:112.60px;height:7px"></div>
<div class="hl" style="left:211.30px;top:118.80px;width:7px"></div>
<div class="t tr" style="left:219.8px;top:112.6px;">hysteresis = 0</div>
<div class="vl" style="left:211.30px;top:126.55px;height:7px"></div>
<div class="hl" style="left:211.30px;top:132.75px;width:7px"></div>
<div class="t tr" style="left:219.8px;top:126.55px;">timeToTrigger = ms256</div>
<div class="vl" style="left:182.30px;top:140.50px;height:7px"></div>
<div class="hl" style="left:182.30px;top:146.70px;width:7px"></div>
<div class="t tr" style="left:190.8px;top:140.5px;">maxReportCells = 3</div>
<div class="vl" style="left:182.30px;top:154.45px;height:7px"></div>
<div class="hl" style="left:182.30px;top:160.65px;width:7px"></div>
<div class="t tr" style="left:190.8px;top:154.45px;">reportInterval = ms1024</div>
<div class="vl" style="left:182.30px;top:168.40px;height:7px"></div>
<div class="hl" style="left:182.30px;top:174.60px;width:7px"></div>
<div class="t tr" style="left:190.8px;top:168.4px;">reportAmount = r1</div>
<div class="vl" style="left:124.30px;top:182.35px;height:3px"></div>
<div class="hl" style="left:127.30px;top:188.55px;width:5px"></div>
<div class="box" style="left:120.80px;top:185.35px"></div>
<div class="t tr" style="left:132.8px;top:182.35px;">measIdToAddModList</div>
<div class="vl" style="left:138.80px;top:196.30px;height:3px"></div>
<div class="hl" style="left:141.80px;top:202.50px;width:5px"></div>
<div class="box" style="left:135.30px;top:199.30px"></div>
<div class="t tr" style="left:147.3px;top:196.3px;">MeasIdToAddMod</div>
<div class="vl" style="left:153.30px;top:210.25px;height:7px"></div>
<div class="hl" style="left:153.30px;top:216.45px;width:7px"></div>
<div class="t tr" style="left:161.8px;top:210.25px;">measId = 7</div>
</div>
<div class="a" style="left:652px;top:299px;width:13px;height:224px;background:#efefef;border-left:1px solid #f6f6f6"></div>
<svg class="a" style="left:655.5px;top:306.5px" width="5" height="3" viewBox="0 0 5 3"><path d="M0 3L2.5 0L5 3Z" fill="#2a2a2a"/></svg>
<div class="a" style="left:652px;top:449px;width:11.6px;height:28.6px;border:1px solid #a6a6a6;border-radius:2px;background:linear-gradient(90deg,#f4f4f4 0%,#ffffff 15%,#e6e6e8 50%,#cfcfd3 85%,#c4c4c8 100%)"></div>
<div class="a" style="left:655px;top:460.1px;width:5px;height:1.4px;background:#707070"></div>
<div class="a" style="left:655px;top:462.6px;width:5px;height:1.4px;background:#707070"></div>
<div class="a" style="left:655px;top:465.1px;width:5px;height:1.4px;background:#707070"></div>
<svg class="a" style="left:655.5px;top:513.1px" width="5" height="3" viewBox="0 0 5 3"><path d="M0 0L2.5 3L5 0Z" fill="#2a2a2a"/></svg>
<div class="a" style="left:287px;top:523px;width:365px;height:13px;background:#efefef;border-top:1px solid #f6f6f6"></div>
<svg class="a" style="left:293.6px;top:526.8px" width="3" height="5" viewBox="0 0 3 5"><path d="M3 0L0 2.5L3 5Z" fill="#2a2a2a"/></svg>
<div class="a" style="left:318.5px;top:524px;width:318.5px;height:11.5px;border:1px solid #a6a6a6;border-radius:2px;background:linear-gradient(180deg,#f4f4f4 0%,#ffffff 15%,#e6e6e8 50%,#cfcfd3 85%,#c4c4c8 100%)"></div>
<div class="a" style="left:474.55px;top:527px;width:1.4px;height:5px;background:#707070"></div>
<div class="a" style="left:477.05px;top:527px;width:1.4px;height:5px;background:#707070"></div>
<div class="a" style="left:479.55px;top:527px;width:1.4px;height:5px;background:#707070"></div>
<svg class="a" style="left:643.5px;top:526.8px" width="3" height="5" viewBox="0 0 3 5"><path d="M0 0L3 2.5L0 5Z" fill="#2a2a2a"/></svg>
<div class="a" style="left:652px;top:523px;width:13px;height:13px;background:#efefef"></div>
<div class="a" style="left:287px;top:536px;width:378px;height:10px;background:#f0f0f0"></div>
<div class="a" style="left:289.6px;top:539.4px;width:189px;height:6px;background:#c9e6c9"></div>
<div class="a" style="left:291.6px;top:541.7px;width:175px;height:4px;background:#fff"></div>
<svg class="a" style="left:480px;top:540px" width="11" height="14" viewBox="0 0 11 14"><rect x="0.5" y="0.5" width="10" height="13" fill="#eef2f8" stroke="#a8b4c4" stroke-width="0.8"/><path d="M2.5 5.5L5.5 2.5L8.5 5.5Z" fill="#5a7ab0"/></svg>
<svg class="a" style="left:497px;top:541px" width="11" height="12" viewBox="0 0 11 12"><rect x="0.5" y="0.5" width="10" height="11" fill="#5eb0ea" stroke="#3a8ad0" stroke-width="0.8"/><rect x="1.6" y="2.2" width="7.8" height="4.5" fill="#e4f2fc"/></svg>
<div class="a" style="left:513.1px;top:539.3px;width:57.7px;height:6px;background:#c9e6c9"></div>
<div class="a" style="left:514.3px;top:541.6px;width:47px;height:4px;background:#fff"></div>
<div class="a" style="left:561px;top:541.6px;width:8.4px;height:4px;background:#eeeeee"></div>
<div class="a" style="left:571.3px;top:539.3px;width:56.5px;height:6px;background:#c9e6c9"></div>
<div class="a" style="left:573.7px;top:541.6px;width:39.6px;height:4px;background:#fff"></div>
<div class="a" style="left:619px;top:541.6px;width:8.4px;height:4px;background:#eeeeee"></div>
<svg class="a" style="left:631px;top:541.5px" width="11" height="12" viewBox="0 0 11 12"><rect x="0.5" y="0.5" width="10" height="11" rx="1" fill="#5aa8ea" stroke="#3a88d0" stroke-width="0.8"/><rect x="2.3" y="1" width="6.4" height="4.2" fill="#eaf4fc"/></svg>
<svg class="a" style="left:651.5px;top:539.5px" width="10" height="12" viewBox="0 0 10 12"><path d="M2.3 5.5V3.6C2.3 1.9 3.5 0.8 5 0.8C6.5 0.8 7.7 1.9 7.7 3.6V5.5" fill="none" stroke="#c4c4c4" stroke-width="1.3"/><rect x="0.6" y="5.2" width="8.8" height="6.2" rx="0.8" fill="url(#gl)" stroke="#d8a020" stroke-width="0.7"/></svg>
<div class="a" style="left:0px;top:542.6px;width:668px;height:3px;background:#fcfcfc"></div>
</body></html>
